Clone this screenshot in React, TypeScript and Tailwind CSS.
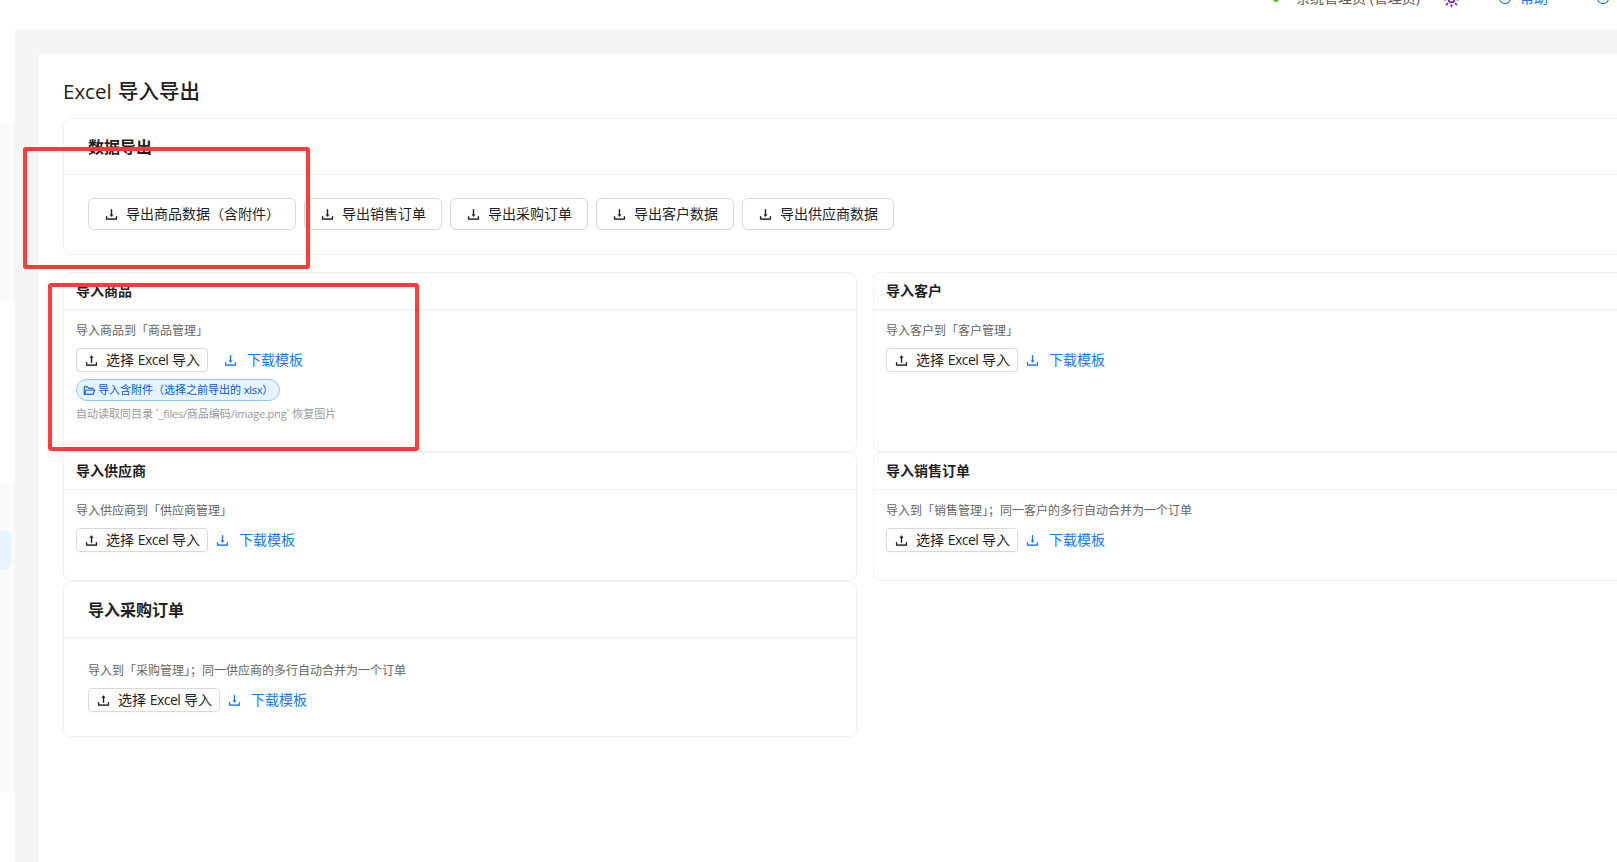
import { AiOutlineDownload, AiOutlineFolderOpen, AiOutlineQuestionCircle, AiOutlineUpload } from "react-icons/ai";
import { Sun } from "lucide-react";

const FONT = "font-['Open_Sans','Noto_Sans_CJK_SC',sans-serif]";

const EXPORTS = [
  { label: "导出商品数据（含附件）", width: "w-[208px]" },
  { label: "导出销售订单", width: "w-[138px]" },
  { label: "导出采购订单", width: "w-[138px]" },
  { label: "导出客户数据", width: "w-[138px]" },
  { label: "导出供应商数据", width: "w-[152px]" },
];

function ImportActions({ linkGap }: { linkGap: string }) {
  return (
    <div className={`flex items-center ${linkGap}`}>
      <button className="flex h-6 w-[132px] items-center gap-[7px] rounded border border-[#d9d9d9] bg-white pl-[7px] text-sm text-[#1f1f1f] shadow-[0_2px_0_rgba(0,0,0,0.02)]">
        <AiOutlineUpload className="h-[15px] w-[15px]" stroke="currentColor" strokeWidth={16} />
        <span>
          选择 <span className="tracking-[-0.5px]">Excel</span> 导入
        </span>
      </button>
      <a className="flex items-center gap-[9px] pl-[7px] text-sm text-[#1677ff]">
        <AiOutlineDownload className="h-[15px] w-[15px]" stroke="currentColor" strokeWidth={16} />
        <span>下载模板</span>
      </a>
    </div>
  );
}

function SmallCard({
  title,
  desc,
  height,
  linkGap = "gap-0",
  children,
}: {
  title: string;
  desc: string;
  height: string;
  linkGap?: string;
  children?: React.ReactNode;
}) {
  return (
    <section className={`${height} rounded-lg border border-[#f0f0f0] bg-white`}>
      <div className="flex h-[37px] items-center border-b border-[#f0f0f0] px-3 text-sm font-semibold text-[#1f1f1f]">
        {title}
      </div>
      <div className="px-3 pt-[12px]">
        <p className="mb-[8px] h-[18px] text-xs leading-[18px] text-[#666]">{desc}</p>
        <ImportActions linkGap={linkGap} />
        {children}
      </div>
    </section>
  );
}

export default function App() {
  return (
    <div className={`${FONT} flex h-screen w-full flex-col overflow-hidden bg-white`}>
      {/* шапка обрезана сверху */}
      <header className="flex h-[30px] shrink-0 justify-end overflow-hidden">
        <div className="-mt-[10px] flex h-4 items-center pr-[7px] text-sm">
          <span className="mt-[2px] h-[6px] w-[6px] rounded-full bg-[#52c41a]" />
          <span className="ml-[17px] w-[122px] whitespace-nowrap text-[#595959]">系统管理员 (管理员)</span>
          <Sun className="ml-[25px] mt-[2px] h-[17px] w-[17px] text-[#722ed1]" strokeWidth={2.5} />
          <span className="ml-[38px] flex items-center gap-[8px] text-[#1677ff]">
            <AiOutlineQuestionCircle className="h-[14px] w-[14px]" />
            帮助
          </span>
          <AiOutlineQuestionCircle className="ml-[48px] h-[14px] w-[14px] text-[#1677ff]" />
        </div>
      </header>
      <div className="flex min-h-0 flex-1">
        <aside className="flex w-[15px] shrink-0 flex-col">
          <div className="h-[92px]" />
          <div className="h-[180px] bg-[#fafafa]" />
          <div className="h-[180px]" />
          <div className="h-[311px] bg-[#fafafa] pt-[48px]">
            <div className="h-[40px] w-[11px] rounded-r-lg bg-[#e6f4ff]" />
          </div>
        </aside>
        <main className="min-w-0 flex-1 bg-[#f5f5f5] pl-[24px] pt-[24px]">
          <div className="h-full w-[1700px] bg-white pl-[24px] pt-[24px]">
            <h1 className="mb-[14px] h-[26px] text-[20.5px] font-medium leading-[26px] text-[#1f1f1f] [word-spacing:1px]">
              Excel 导入导出
            </h1>
            <section className="mb-[17px] h-[137px] w-[1604px] rounded-lg border border-[#f0f0f0]">
              <div className="flex h-[56px] items-center border-b border-[#f0f0f0] px-6 text-base font-semibold text-[#1f1f1f]">
                数据导出
              </div>
              <div className="flex gap-2 px-6 pt-[23px]">
                {EXPORTS.map((item) => (
                  <button
                    key={item.label}
                    className={`${item.width} flex h-8 items-center gap-[7px] rounded-md border border-[#d9d9d9] bg-white pl-[15px] text-sm text-[#1f1f1f] shadow-[0_2px_0_rgba(0,0,0,0.02)]`}
                  >
                    <AiOutlineDownload className="h-[15px] w-[15px]" stroke="currentColor" strokeWidth={16} />
                    <span>{item.label}</span>
                  </button>
                ))}
              </div>
            </section>
            <div className="grid w-[1604px] grid-cols-[794px_794px] gap-x-4">
              <SmallCard title="导入商品" desc="导入商品到「商品管理」" height="h-[180px]" linkGap="gap-2">
                <div className="mt-[7px] flex h-[22px] w-[204px] items-center gap-[2px] rounded-full border border-[#91caff] bg-[#e6f4ff] pl-[6px] text-[11px] text-[#0958d9]">
                  <AiOutlineFolderOpen className="h-[13px] w-[13px]" stroke="currentColor" strokeWidth={16} />
                  <span>
                    导入含附件（选择之前导出的 <span className="tracking-[-0.3px]">xlsx</span>）
                  </span>
                </div>
                <p className="mt-[5px] text-[11px] leading-4 text-[#999]">
                  自动读取同目录 <span className="tracking-[-0.2px]">`_files/</span>商品编码
                  <span className="tracking-[-0.2px]">/image.png`</span> 恢复图片
                </p>
              </SmallCard>
              <SmallCard title="导入客户" desc="导入客户到「客户管理」" height="h-[180px]" />
              <SmallCard title="导入供应商" desc="导入供应商到「供应商管理」" height="h-[129px]" />
              <SmallCard title="导入销售订单" desc="导入到「销售管理」；同一客户的多行自动合并为一个订单" height="h-[129px]" />
              <section className="h-[156px] rounded-lg border border-[#f0f0f0] bg-white">
                <div className="flex h-[56px] items-center border-b border-[#f0f0f0] px-6 text-base font-semibold text-[#1f1f1f]">
                  导入采购订单
                </div>
                <div className="px-6 pt-[24px]">
                  <p className="mb-[8px] h-[18px] text-xs leading-[18px] text-[#666]">
                    导入到「采购管理」；同一供应商的多行自动合并为一个订单
                  </p>
                  <ImportActions linkGap="gap-0" />
                </div>
              </section>
            </div>
          </div>
        </main>
      </div>
      {/* красные рамки поверх скриншота */}
      <div className="pointer-events-none absolute left-[23px] top-[147px] h-[122px] w-[287px] rounded-[3px] border-[4px] border-[#ff3b3b]" />
      <div className="pointer-events-none absolute left-[48px] top-[283px] h-[168px] w-[371px] rounded-[3px] border-[4px] border-[#ff3b3b]" />
    </div>
  );
}
